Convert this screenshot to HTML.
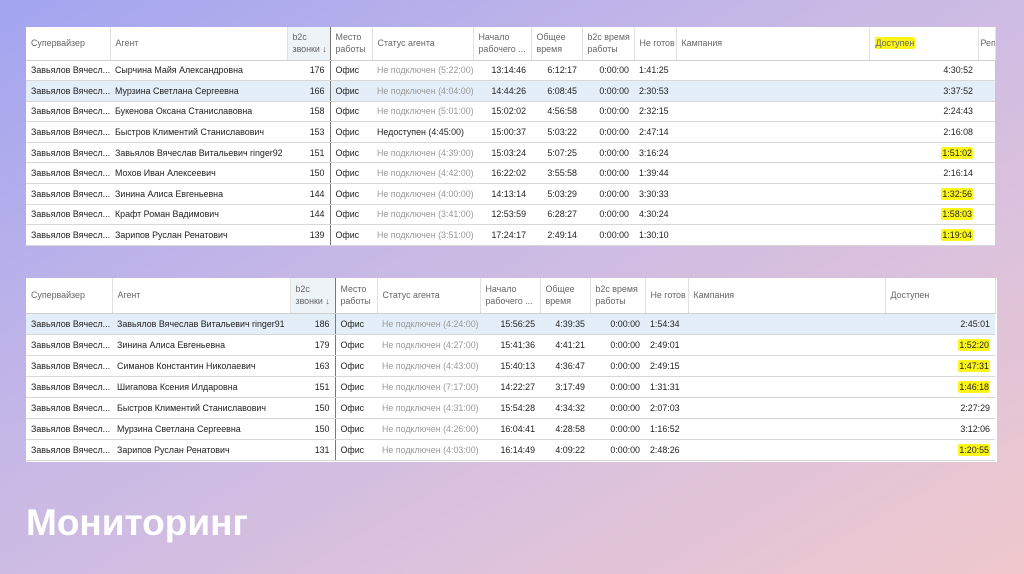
<!DOCTYPE html>
<html><head><meta charset="utf-8"><style>
*{margin:0;padding:0;box-sizing:border-box}
body{width:1024px;height:574px;overflow:hidden;position:relative;
background:linear-gradient(150deg,#a2a5f0 0%,#c6b8e6 40%,#dcc2dc 70%,#efc8cc 100%);
font-family:"Liberation Sans",Arial,sans-serif;}
.t{position:absolute;background:#fff;}
table{border-collapse:collapse;table-layout:fixed;font-size:8.9px;color:#222}
td,th{white-space:nowrap;overflow:hidden;padding:0 5px;font-weight:normal;text-align:left}
th{color:#666;border-right:1px solid #e2e2e2;border-bottom:1px solid #cfcfcf;line-height:12px;vertical-align:middle}
td{border-bottom:1px solid #d8d8d8}
tr.sel td{background:#e4eef8}
.r{text-align:right}
.g{color:#999}
.dv{border-right:1.5px solid #777 !important}
th.s{background:#eef3f8}
.hl{background:#fbf51a;padding:1px 1px;border-radius:2px}
h1{position:absolute;left:26px;top:502px;font-size:37px;color:#fff;font-weight:bold;letter-spacing:0px}
</style></head><body>

<div class="t" style="left:26px;top:27px;width:969px;height:218px">
<table style="width:969px">
<colgroup><col style="width:84px"><col style="width:177px"><col style="width:43px"><col style="width:42px"><col style="width:101px"><col style="width:58px"><col style="width:51px"><col style="width:52px"><col style="width:42px"><col style="width:193px"><col style="width:109px"><col style="width:17px"></colgroup>
<tr style="height:33px"><th>Супервайзер</th><th>Агент</th><th class="s dv">b2c<br>звонки ↓</th><th>Место<br>работы</th><th>Статус агента</th><th>Начало<br>рабочего ...</th><th>Общее<br>время</th><th>b2c время<br>работы</th><th>Не готов</th><th>Кампания</th><th><span class="hl">Доступен</span></th><th style="padding:0 2px">Реп</th></tr>
<tr style="height:20.6px"><td>Завьялов Вячесл...</td><td>Сырчина Майя Александровна</td><td class="r dv">176</td><td>Офис</td><td class="g">Не подключен (5:22:00)</td><td class="r">13:14:46</td><td class="r">6:12:17</td><td class="r">0:00:00</td><td>1:41:25</td><td></td><td class="r">4:30:52</td><td></td></tr>
<tr class="sel" style="height:20.6px"><td>Завьялов Вячесл...</td><td>Мурзина Светлана Сергеевна</td><td class="r dv">166</td><td>Офис</td><td class="g">Не подключен (4:04:00)</td><td class="r">14:44:26</td><td class="r">6:08:45</td><td class="r">0:00:00</td><td>2:30:53</td><td></td><td class="r">3:37:52</td><td></td></tr>
<tr style="height:20.6px"><td>Завьялов Вячесл...</td><td>Букенова Оксана Станиславовна</td><td class="r dv">158</td><td>Офис</td><td class="g">Не подключен (5:01:00)</td><td class="r">15:02:02</td><td class="r">4:56:58</td><td class="r">0:00:00</td><td>2:32:15</td><td></td><td class="r">2:24:43</td><td></td></tr>
<tr style="height:20.6px"><td>Завьялов Вячесл...</td><td>Быстров Климентий Станиславович</td><td class="r dv">153</td><td>Офис</td><td>Недоступен (4:45:00)</td><td class="r">15:00:37</td><td class="r">5:03:22</td><td class="r">0:00:00</td><td>2:47:14</td><td></td><td class="r">2:16:08</td><td></td></tr>
<tr style="height:20.6px"><td>Завьялов Вячесл...</td><td>Завьялов Вячеслав Витальевич ringer92</td><td class="r dv">151</td><td>Офис</td><td class="g">Не подключен (4:39:00)</td><td class="r">15:03:24</td><td class="r">5:07:25</td><td class="r">0:00:00</td><td>3:16:24</td><td></td><td class="r"><span class="hl">1:51:02</span></td><td></td></tr>
<tr style="height:20.6px"><td>Завьялов Вячесл...</td><td>Мохов Иван Алексеевич</td><td class="r dv">150</td><td>Офис</td><td class="g">Не подключен (4:42:00)</td><td class="r">16:22:02</td><td class="r">3:55:58</td><td class="r">0:00:00</td><td>1:39:44</td><td></td><td class="r">2:16:14</td><td></td></tr>
<tr style="height:20.6px"><td>Завьялов Вячесл...</td><td>Зинина Алиса Евгеньевна</td><td class="r dv">144</td><td>Офис</td><td class="g">Не подключен (4:00:00)</td><td class="r">14:13:14</td><td class="r">5:03:29</td><td class="r">0:00:00</td><td>3:30:33</td><td></td><td class="r"><span class="hl">1:32:56</span></td><td></td></tr>
<tr style="height:20.6px"><td>Завьялов Вячесл...</td><td>Крафт Роман Вадимович</td><td class="r dv">144</td><td>Офис</td><td class="g">Не подключен (3:41:00)</td><td class="r">12:53:59</td><td class="r">6:28:27</td><td class="r">0:00:00</td><td>4:30:24</td><td></td><td class="r"><span class="hl">1:58:03</span></td><td></td></tr>
<tr style="height:20.6px"><td>Завьялов Вячесл...</td><td>Зарипов Руслан Ренатович</td><td class="r dv">139</td><td>Офис</td><td class="g">Не подключен (3:51:00)</td><td class="r">17:24:17</td><td class="r">2:49:14</td><td class="r">0:00:00</td><td>1:30:10</td><td></td><td class="r"><span class="hl">1:19:04</span></td><td></td></tr>
</table></div>

<div class="t" style="left:26px;top:278px;width:971px;height:184px">
<table style="width:969px">
<colgroup><col style="width:86px"><col style="width:178px"><col style="width:45px"><col style="width:42px"><col style="width:103px"><col style="width:60px"><col style="width:50px"><col style="width:55px"><col style="width:43px"><col style="width:197px"><col style="width:110px"></colgroup>
<tr style="height:35px"><th>Супервайзер</th><th>Агент</th><th class="s dv">b2c<br>звонки ↓</th><th>Место<br>работы</th><th>Статус агента</th><th>Начало<br>рабочего ...</th><th>Общее<br>время</th><th>b2c время<br>работы</th><th>Не готов</th><th>Кампания</th><th>Доступен</th></tr>
<tr class="sel" style="height:21px"><td>Завьялов Вячесл...</td><td>Завьялов Вячеслав Витальевич ringer91</td><td class="r dv">186</td><td>Офис</td><td class="g">Не подключен (4:24:00)</td><td class="r">15:56:25</td><td class="r">4:39:35</td><td class="r">0:00:00</td><td>1:54:34</td><td></td><td class="r">2:45:01</td></tr>
<tr style="height:21px"><td>Завьялов Вячесл...</td><td>Зинина Алиса Евгеньевна</td><td class="r dv">179</td><td>Офис</td><td class="g">Не подключен (4:27:00)</td><td class="r">15:41:36</td><td class="r">4:41:21</td><td class="r">0:00:00</td><td>2:49:01</td><td></td><td class="r"><span class="hl">1:52:20</span></td></tr>
<tr style="height:21px"><td>Завьялов Вячесл...</td><td>Симанов Константин Николаевич</td><td class="r dv">163</td><td>Офис</td><td class="g">Не подключен (4:43:00)</td><td class="r">15:40:13</td><td class="r">4:36:47</td><td class="r">0:00:00</td><td>2:49:15</td><td></td><td class="r"><span class="hl">1:47:31</span></td></tr>
<tr style="height:21px"><td>Завьялов Вячесл...</td><td>Шигапова Ксения Илдаровна</td><td class="r dv">151</td><td>Офис</td><td class="g">Не подключен (7:17:00)</td><td class="r">14:22:27</td><td class="r">3:17:49</td><td class="r">0:00:00</td><td>1:31:31</td><td></td><td class="r"><span class="hl">1:46:18</span></td></tr>
<tr style="height:21px"><td>Завьялов Вячесл...</td><td>Быстров Климентий Станиславович</td><td class="r dv">150</td><td>Офис</td><td class="g">Не подключен (4:31:00)</td><td class="r">15:54:28</td><td class="r">4:34:32</td><td class="r">0:00:00</td><td>2:07:03</td><td></td><td class="r">2:27:29</td></tr>
<tr style="height:21px"><td>Завьялов Вячесл...</td><td>Мурзина Светлана Сергеевна</td><td class="r dv">150</td><td>Офис</td><td class="g">Не подключен (4:26:00)</td><td class="r">16:04:41</td><td class="r">4:28:58</td><td class="r">0:00:00</td><td>1:16:52</td><td></td><td class="r">3:12:06</td></tr>
<tr style="height:21px"><td>Завьялов Вячесл...</td><td>Зарипов Руслан Ренатович</td><td class="r dv">131</td><td>Офис</td><td class="g">Не подключен (4:03:00)</td><td class="r">16:14:49</td><td class="r">4:09:22</td><td class="r">0:00:00</td><td>2:48:26</td><td></td><td class="r"><span class="hl">1:20:55</span></td></tr>
</table></div>

<h1>Мониторинг</h1>
</body></html>
